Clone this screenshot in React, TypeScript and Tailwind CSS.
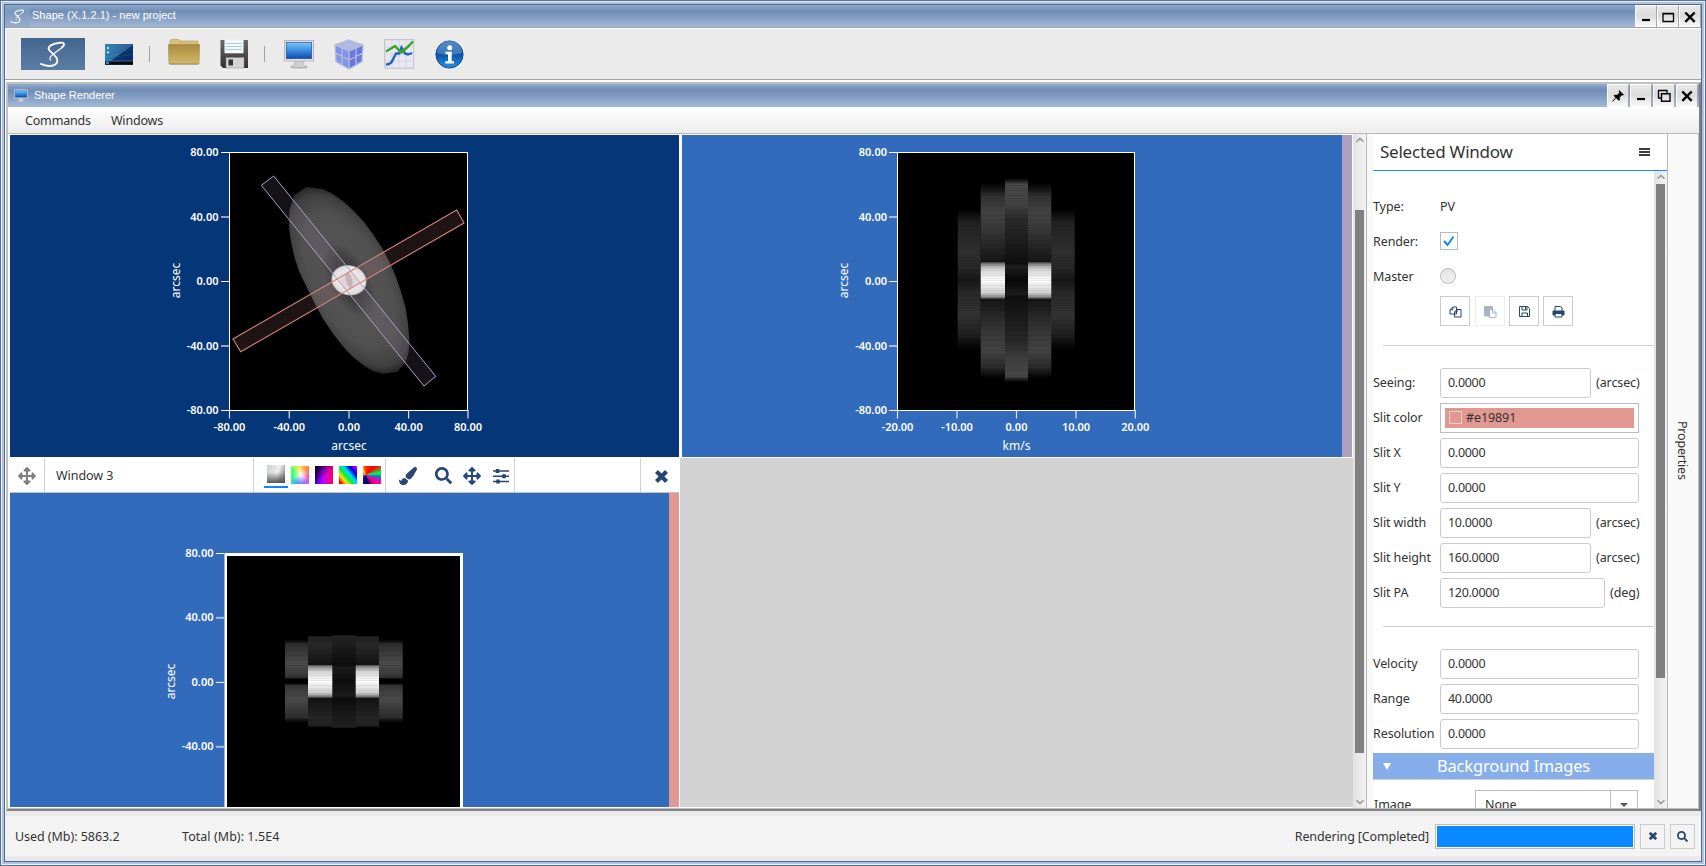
import React from "react";
import { FaArrowsAlt, FaPaintBrush, FaSearch } from "react-icons/fa";

const titleBar =
  "bg-[linear-gradient(to_bottom,#92aacb_0%,#6f8db5_28%,#7f9ac0_50%,#9fb6d6_95%,#a3b9d8_100%)]";
const ui = "font-['Noto_Sans','Noto_Sans_CJK_SC',sans-serif]";

function Monitor({ className }: { className: string }) {
  return (
    <svg className={className} viewBox="0 0 30 29" preserveAspectRatio="none">
      <defs>
        <linearGradient id="scr" x1="0" y1="0" x2="0" y2="1">
          <stop offset="0" stopColor="#7cc6f8" />
          <stop offset=".5" stopColor="#3a8ee0" />
          <stop offset="1" stopColor="#0d47ad" />
        </linearGradient>
      </defs>
      <ellipse cx="15" cy="27.6" rx="9" ry="1.2" fill="#c9c9c9" />
      <path d="M11 21h8l1 5h3v1.5H7V26h3z" fill="#cfcfcf" stroke="#a5a5a5" strokeWidth=".6" />
      <rect x=".5" y=".5" width="29" height="20.5" fill="#efefef" stroke="#b5b5b5" />
      <rect x="2.3" y="2.3" width="25.4" height="16.4" fill="url(#scr)" stroke="#31559a" strokeWidth=".8" />
    </svg>
  );
}

function LogoS({ className, w }: { className: string; w: number }) {
  return (
    <svg className={className} viewBox="0 0 28 28" fill="none" stroke="#fff" strokeLinecap="round">
      <path
        d="M23.500 6.500C27 3.200 25.500 1.300 21 1.800C14 2.600 8.500 5.500 9.500 8.500C10.500 11.500 18.500 15.500 18.500 20C18.500 26.500 9 27.300 1.500 23.800"
        strokeWidth={w}
      />
      <path d="M23.500 6.500C21 9 17 11.500 14 13.800C11.300 16 9.800 18.300 11.500 19.800" strokeWidth={w * 0.65} />
    </svg>
  );
}

function WinBtn({ kind, h }: { kind: string; h: string }) {
  return (
    <div
      className={`${h} flex w-[22px] items-center justify-center border-l border-t border-r border-l-white border-t-white border-r-[#a8a8a8] bg-[linear-gradient(to_bottom,#e9e9e9,#dcdcdc_45%,#fbfbfb)]`}
    >
      <svg width="14" height="14" viewBox="0 0 14 14" fill="none" stroke="#000">
        {kind === "min" && <path d="M3 10h8" strokeWidth="2.2" />}
        {kind === "max" && <path d="M2 3.500h10.500v8H2zM1.500 3.800h11.500" strokeWidth="1.300" />}
        {kind === "restore" && (
          <>
            <path d="M1 1.500h9.500M1.500 1v8M10 1v3M1 9h3" strokeWidth="1.300" />
            <path d="M4.500 4.700h8.500v7.500H4.500z" strokeWidth="1.400" />
          </>
        )}
        {kind === "close" && <path d="M2.300 2.500l9.400 9.400M11.700 2.500l-9.400 9.400" strokeWidth="2.400" />}
        {kind === "pin" && (
          <>
            <path d="M1.500 12.500L5.500 8" strokeWidth="1" />
            <path d="M8 1.200l4.800 4.500-.9.600-1-.2-2.300 2.400.2 2.400-1 .7-5-4.800.9-.9 2.500.1 2.200-2.300-.4-1.500z" fill="#000" strokeWidth=".3" />
          </>
        )}
      </svg>
    </div>
  );
}

function Toolbar() {
  return (
    <div className="flex h-[53px] shrink-0 items-center border-y border-[#a3a3a3] bg-[#ebebeb] pl-4 pt-px shadow-[inset_0_1px_0_#fff,inset_1px_0_0_#fff]">
      <div className="flex h-8 w-16 items-center justify-center bg-[linear-gradient(to_bottom,#42658f,#5b7ca5)]">
        <LogoS className="h-[27px] w-7" w={1.9} />
      </div>
      <svg className="ml-5 mt-px h-[23px] w-7" viewBox="0 0 28 23">
        <defs>
          <linearGradient id="desk" x1="0" y1="0" x2="1" y2="0">
            <stop offset="0" stopColor="#2f87b8" />
            <stop offset="1" stopColor="#35588f" />
          </linearGradient>
          <linearGradient id="desk2" x1="0" y1="0" x2="1" y2="1">
            <stop offset="0" stopColor="#0d3a72" />
            <stop offset="1" stopColor="#0a2a63" />
          </linearGradient>
        </defs>
        <rect width="28" height="21" y="1" fill="url(#desk)" />
        <path d="M28 2L6 17.500H28z" fill="url(#desk2)" />
        <path d="M0 12L28 6M0 16L28 11" stroke="#1d5c98" strokeWidth=".5" />
        <rect y="18.500" width="28" height="3.200" fill="#05070d" />
        <rect x="1" y="18.800" width="3" height="2" fill="#3c9be0" />
        <rect x="2" y="4" width="2" height="2" fill="#c4e5c4" />
        <rect x="2" y="8.500" width="2" height="2" fill="#c4e5c4" />
      </svg>
      <div className="ml-4 h-4 w-px bg-[#a0a0a0]" />
      <svg className="-mt-1 ml-[18px] h-[26px] w-8" viewBox="0 0 32 26">
        <defs>
          <linearGradient id="fold" x1="0" y1="0" x2="0" y2="1">
            <stop offset="0" stopColor="#a98b3e" />
            <stop offset="1" stopColor="#d2b767" />
          </linearGradient>
        </defs>
        <path d="M2 6V1.500L3 .5h8L12.500 2H30v4z" fill="#d6bf7b" stroke="#b59a50" strokeWidth=".6" />
        <path d="M.3 5.500H31.700L31 24.700H1z" fill="url(#fold)" stroke="#a88b43" strokeWidth=".6" />
        <path d="M1.500 25.200h29" stroke="#8c8163" strokeWidth=".8" />
      </svg>
      <svg className="ml-5 h-[30px] w-[29px]" viewBox="0 0 29 30">
        <defs>
          <linearGradient id="flop" x1="0" y1="0" x2="0" y2="1">
            <stop offset="0" stopColor="#6a6a6a" />
            <stop offset="1" stopColor="#303030" />
          </linearGradient>
        </defs>
        <path d="M.5 1H28v28H3L.5 26.500z" fill="url(#flop)" />
        <rect x="4.500" y=".8" width="19" height="13.500" fill="#f4fafc" />
        <path d="M6 4.500h16M6 7.500h16M6 10.500h16" stroke="#a8cfdc" />
        <rect x="6" y="18.500" width="18" height="10.500" fill="#d4d4d4" stroke="#888" strokeWidth=".5" />
        <rect x="8.500" y="20.500" width="4.500" height="6" fill="#333" />
      </svg>
      <div className="ml-[15px] h-4 w-px bg-[#a0a0a0]" />
      <Monitor className="ml-[19px] h-[29px] w-[30px]" />
      <svg className="ml-5 h-[31px] w-[30px]" viewBox="0 0 30 31">
        <path d="M15 1L29 6 15 12 1 6z" fill="#a9b6ef" />
        <path d="M1 6L15 12V30L2 22.500z" fill="#7f93f0" />
        <path d="M29 6L15 12V30L28 22.500z" fill="#6578e0" />
        <g stroke="#b9bccd" strokeWidth="1.300" fill="none">
          <path d="M15 1L29 6 15 12 1 6zM1 6L2 22.500 15 30 28 22.500 29 6M15 12V30M8 3.500L22 9V26M22 3.500L8 9V26M1.500 14L15 21 28.500 14" />
        </g>
      </svg>
      <svg className="ml-5 h-[30px] w-[31px]" viewBox="0 0 31 30">
        <rect x=".7" y=".7" width="29" height="28.500" fill="#e8e8f3" stroke="#bdbdca" />
        <path d="M8 1v28M15 1v28M22 1v28M1 8h29M1 15h29M1 22h29" stroke="#cccddb" strokeWidth=".7" />
        <path d="M2 25.500q5 0 7-5l3-6h3l2.500-6 3.500 6 3 1 4-1.500" fill="none" stroke="#2464bd" strokeWidth="2.400" />
        <path d="M2 12.500l9-5.500 6 6.500L23 8.500 29 2.500" fill="none" stroke="#38a51c" strokeWidth="2.400" />
      </svg>
      <svg className="ml-[20px] size-[29px]" viewBox="0 0 29 29">
        <defs>
          <linearGradient id="inf" x1="0" y1="0" x2="0" y2="1">
            <stop offset="0" stopColor="#2d6fb8" />
            <stop offset=".5" stopColor="#0c55a6" />
            <stop offset="1" stopColor="#2592e8" />
          </linearGradient>
        </defs>
        <circle cx="14.500" cy="14.500" r="13.600" fill="url(#inf)" stroke="#174b87" />
        <path d="M2 13a12.500 12.500 0 0 1 25 0q-12.500 4-25 0z" fill="#fff" opacity=".2" />
        <circle cx="14.700" cy="7.800" r="2.500" fill="#fff" />
        <path d="M10.500 11.800h6.200v9.400h2.300v2.300h-8.800v-2.300h2.800v-7h-2.500z" fill="#fff" />
      </svg>
    </div>
  );
}

type AxisProps = {
  x0: number;
  labelX: number;
  ys: [number, string][];
  xs: [number, string][];
  titleX: number;
  titleY: number;
  unit?: string;
  unitX?: number;
};

function Axes({ x0, labelX, ys, xs, titleX, titleY, unit, unitX }: AxisProps) {
  return (
    <g fill="#fff" className="font-['Noto_Sans',sans-serif] text-[11px]">
      {ys.map(([y, t]) => (
        <g key={t}>
          <path d={`M${x0 - 8} ${y}H${x0}`} stroke="#fff" strokeWidth={t.includes("40") ? 2 : 1} opacity={t.includes("40") ? 0.55 : 1} />
          <text x={labelX} y={y + 3.5} textAnchor="end" fontWeight="600">{t}</text>
        </g>
      ))}
      {xs.map(([x, t]) => (
        <g key={t}>
          <path d={`M${x} 410V418.500`} stroke="#fff" strokeWidth="1.200" opacity=".85" />
          <text x={x} y="431" textAnchor="middle" fontWeight="600">{t}</text>
        </g>
      ))}
      <text textAnchor="middle" fontSize="12" transform={`translate(${titleX} ${titleY}) rotate(-90)`}>arcsec</text>
      {unit && <text x={unitX} y="450" fontSize="12" textAnchor="middle">{unit}</text>}
    </g>
  );
}

const yTicks: [number, string][] = [[152.5, "80.00"], [217, "40.00"], [281.5, "0.00"], [346, "-40.00"], [410.5, "-80.00"]];

function ImageView() {
  return (
    <svg className="block h-[322px] w-[669px] bg-[#053678]" viewBox="10 135 669 322">
      <defs>
        <radialGradient id="disk" gradientUnits="userSpaceOnUse" cx="0" cy="0" r="1" gradientTransform="translate(349.300 280.500) rotate(62) scale(102 50)">
          <stop offset="0" stopColor="#333" />
          <stop offset=".2" stopColor="#3c3c3c" />
          <stop offset=".42" stopColor="#535353" />
          <stop offset=".72" stopColor="#505050" />
          <stop offset=".92" stopColor="#404040" />
          <stop offset="1" stopColor="#282828" />
        </radialGradient>
        <radialGradient id="core">
          <stop offset="0" stopColor="#e6dfe0" />
          <stop offset=".7" stopColor="#efefef" />
          <stop offset=".92" stopColor="#e2e2e2" />
          <stop offset="1" stopColor="#999" />
        </radialGradient>
      </defs>
      <rect x="229.500" y="152.500" width="238" height="258" fill="#000" stroke="#fff" />
      <path
        d="M306.700 187L323.300 189.300L331.700 193.300L343.300 201.300L354 211.300L364 222L373.300 234.700L381.700 247.300L389.300 261.700L396 276.700L401.300 292.700L405.300 306.700L408 323.300L409.300 338.300L408.700 351.700L406 361.700L397.300 371.700L383.300 373.700L373.300 371.300L363.300 365.300L353.300 357.300L343.300 346.700L333.300 334L323.300 319.300L314.700 303.300L306.700 287.300L299.300 272L294.300 256.700L290.700 240L289 226.700L289.300 210L294.300 195Z"
        fill="url(#disk)"
      />
      <ellipse cx="349" cy="280.300" rx="17.800" ry="15" fill="url(#core)" transform="rotate(15 349 280.300)" />
      <ellipse cx="349" cy="280.300" rx="3" ry="8" fill="#b9aeb1" opacity=".8" transform="rotate(-15 349 280.300)" />
      <path d="M261.300 185.300L273.700 176L435.700 376.300L424 386Z" fill="#b0a0c0" fillOpacity=".12" stroke="#aaa2c6" />
      <path d="M233 339L456.700 210L464 223L240.700 351.700Z" fill="#e19891" fillOpacity=".13" stroke="#d4857f" strokeWidth="1.100" />
      <Axes
        x0={229} labelX={218.500} ys={yTicks}
        xs={[[229.5, "-80.00"], [289.3, "-40.00"], [349, "0.00"], [408.6, "40.00"], [468, "80.00"]]}
        titleX={180} titleY={280.500} unit="arcsec" unitX={349}
      />
    </svg>
  );
}

function StripeDefs({ id }: { id: string }) {
  const stops: Record<string, [number, string, number][]> = {
    outer: [[0, "#222", 0], [0.1, "#222", 1], [0.3, "#2f2f2f", 1], [0.42, "#262626", 1], [0.5, "#171717", 1], [0.6, "#2a2a2a", 1], [0.75, "#333", 1], [0.9, "#1c1c1c", 1], [1, "#111", 0]],
    mid: [[0, "#222", 0], [0.07, "#303030", 1], [0.15, "#434343", 1], [0.25, "#363636", 1], [0.4, "#161616", 1], [0.6, "#161616", 1], [0.75, "#363636", 1], [0.86, "#434343", 1], [0.94, "#2a2a2a", 1], [1, "#222", 0]],
    center: [[0, "#303030", 0], [0.03, "#484848", 1], [0.13, "#424242", 1], [0.2, "#2a2a2a", 1], [0.4, "#121212", 1], [0.42, "#0f0f0f", 1], [0.43, "#202020", 1], [0.5, "#080808", 1], [0.57, "#1c1c1c", 1], [0.58, "#0f0f0f", 1], [0.8, "#282828", 1], [0.88, "#3e3e3e", 1], [0.97, "#484848", 1], [1, "#303030", 0]],
    hot: [[0, "#555", 1], [0.08, "#9a9a9a", 1], [0.2, "#d6d6d6", 1], [0.4, "#f0f0f0", 1], [0.5, "#fff", 1], [0.6, "#f0f0f0", 1], [0.82, "#d4d4d4", 1], [0.93, "#999", 1], [1, "#333", 1]],
    lobeT: [[0, "#111", 0], [0.12, "#2d2d2d", 1], [0.6, "#4a4a4a", 1], [0.85, "#3d3d3d", 1], [0.95, "#333", 1], [1, "#0a0a0a", 1]],
    lobeB: [[0, "#0a0a0a", 1], [0.05, "#333", 1], [0.15, "#3d3d3d", 1], [0.4, "#4a4a4a", 1], [0.85, "#2d2d2d", 1], [1, "#111", 0]],
    dim: [[0, "#222", 1], [0.1, "#282828", 1], [0.32, "#131313", 1], [0.68, "#131313", 1], [0.9, "#252525", 1], [1, "#202020", 1]],
    dimC: [[0, "#242424", 1], [0.32, "#0d0d0d", 1], [0.35, "#1c1c1c", 1], [0.5, "#0e0e0e", 1], [0.65, "#1c1c1c", 1], [0.68, "#0d0d0d", 1], [1, "#222", 1]],
  };
  return (
    <defs>
      {Object.entries(stops).map(([k, list]) => (
        <linearGradient key={k} id={`${id}-${k}`} x1="0" y1="0" x2="0" y2="1">
          {list.map(([o, c, a], i) => <stop key={i} offset={o} stopColor={c} stopOpacity={a} />)}
        </linearGradient>
      ))}
      <pattern id={`${id}-scan`} width="4" height="5" patternUnits="userSpaceOnUse">
        <rect width="4" height="1" fill="#000" opacity=".08" />
        <rect width="4" height="1" y="3" fill="#000" opacity=".04" />
      </pattern>
    </defs>
  );
}

function PvView() {
  return (
    <svg className="block h-[322px] w-[660px] bg-[#326bbc]" viewBox="682 135 660 322">
      <StripeDefs id="a" />
      <rect x="897.500" y="152.500" width="237" height="258" fill="#000" stroke="#fff" />
      <rect x="957.700" y="209" width="23" height="142" fill="url(#a-outer)" />
      <rect x="1051" y="209" width="23.700" height="142" fill="url(#a-outer)" />
      <rect x="980.700" y="182" width="24.300" height="197" fill="url(#a-mid)" />
      <rect x="1028" y="182" width="23.300" height="197" fill="url(#a-mid)" />
      <rect x="1005" y="178" width="23" height="204.500" fill="url(#a-center)" />
      <rect x="980.700" y="262.300" width="24.300" height="36.700" fill="url(#a-hot)" />
      <rect x="1028" y="262.300" width="23.300" height="36.700" fill="url(#a-hot)" />
      <rect x="957" y="178" width="118" height="205" fill="url(#a-scan)" />
      <Axes
        x0={897} labelX={887} ys={yTicks}
        xs={[[897.5, "-20.00"], [957, "-10.00"], [1016.500, "0.00"], [1076, "10.00"], [1135.300, "20.00"]]}
        titleX={848} titleY={280.500} unit="km/s" unitX={1016.500}
      />
    </svg>
  );
}

function PvView3() {
  return (
    <svg className="block h-[314px] w-[659px] bg-[#326bbc]" viewBox="10 493 659 314">
      <StripeDefs id="b" />
      <rect x="224" y="553" width="239" height="270" fill="#fff" />
      <path d="M224.500 553V807" stroke="#aab4c4" />
      <rect x="227" y="556" width="233" height="260" fill="#000" />
      <rect x="285" y="639" width="23" height="40" fill="url(#b-lobeT)" />
      <rect x="379" y="639" width="23.700" height="40" fill="url(#b-lobeT)" />
      <rect x="285" y="683.500" width="23" height="40" fill="url(#b-lobeB)" />
      <rect x="379" y="683.500" width="23.700" height="40" fill="url(#b-lobeB)" />
      <rect x="308" y="636.300" width="71" height="90.400" fill="url(#b-dim)" />
      <rect x="332.300" y="635.300" width="23.400" height="92.400" fill="url(#b-dimC)" />
      <rect x="308" y="665" width="24.300" height="33" fill="url(#b-hot)" />
      <rect x="355.700" y="665" width="23.300" height="33" fill="url(#b-hot)" />
      <rect x="285" y="635" width="118" height="93" fill="url(#b-scan)" />
      <Axes
        x0={224} labelX={213.500}
        ys={[[553.5, "80.00"], [617.8, "40.00"], [682.400, "0.00"], [746.800, "-40.00"]]}
        xs={[]} titleX={175} titleY={681.500}
      />
    </svg>
  );
}

function Swatch({ cls, on }: { cls: string; on?: boolean }) {
  return (
    <div className={`flex h-full w-6 flex-col items-center ${on ? "pt-[7px]" : "pt-2"}`}>
      <div className={`size-[18px] ${cls}`} />
      {on && <div className="mt-[3px] h-[2px] w-6 bg-[#0a84ff]" />}
    </div>
  );
}

function WindowThree() {
  const c = "text-[#26476f]";
  return (
    <div className="w-[669px]">
      <div className="flex h-[35px] border-b border-[#c2c2c2] bg-white">
        <div className="flex w-[35px] items-center justify-center border-r border-[#d0d0d0] pt-px text-[#808080]">
          <FaArrowsAlt size={18} />
        </div>
        <div className={`flex w-[209px] items-center border-r border-[#d0d0d0] pl-[11px] pt-[3px] text-[12.500px] tracking-[-0.050px] text-[#333] ${ui}`}>Window 3</div>
        <div className="flex w-[132px] border-r border-[#d0d0d0] pl-[10px]">
          <Swatch on cls="bg-[linear-gradient(to_top,#555_0%,#0000_60%),linear-gradient(110deg,#c8d0cc,#eee_55%,#777_95%)]" />
          <Swatch cls="bg-[radial-gradient(circle_at_55%_50%,#fff_0%,#fff0_60%),conic-gradient(from_45deg,#ff8a3c,#ff4d9a,#b66bff,#4d9aff,#34ff8a,#4dff5e,#ffe95a,#ff8a3c)]" />
          <Swatch cls="bg-[linear-gradient(to_bottom_right,#000_0%,#0000_55%),linear-gradient(to_right,#3a00d8,#c800ff_50%,#ff0055)]" />
          <Swatch cls="bg-[linear-gradient(50deg,#ff0000_8%,#ffe600_25%,#00f03c_42%,#00d8ff_58%,#0000d8_75%,#b400ff_95%)]" />
          <Swatch cls="bg-[conic-gradient(from_0deg_at_15%_50%,#ff2a00,#ff0000_14%,#00ff50_23%,#007acc_27%,#ff00a8_32%,#e00080_38%,#000070_46%,#0a0a90_58%,#ff5a00_76%,#ffe000_92%,#ff2a00)]" />
        </div>
        <div className={`flex w-[129px] items-center border-r border-[#d0d0d0] pl-[13px] pt-px ${c}`}>
          <FaPaintBrush size={18} />
          <FaSearch size={17} className="ml-[18px]" />
          <FaArrowsAlt size={18} className="ml-[11px]" />
          <svg className="ml-3 h-4 w-4" viewBox="0 0 16 16" stroke="currentColor" strokeWidth="1.500">
            <path d="M0 3h16M0 8.300h16M0 13.500h16" />
            <path d="M4.500 1v4M11 6.300v4M5 11.500v4" strokeWidth="3.500" />
          </svg>
        </div>
        <div className="w-[126px] border-r border-[#d0d0d0]" />
        <div className={`flex flex-1 items-center justify-center pl-[2px] pt-[2px] ${c}`}>
          <svg width="13" height="13" viewBox="0 0 13 13" stroke="currentColor" strokeWidth="4.200"><path d="M1.500 1.500l10 10M11.500 1.500l-10 10" /></svg>
        </div>
      </div>
      <div className="flex">
        <PvView3 />
        <div className="w-[10px] bg-[#e19891]" />
      </div>
    </div>
  );
}

function ScrollBar({ top, thumb, w }: { top: string; thumb: string; w: string }) {
  return (
    <div className={`flex ${w} flex-col items-center bg-[linear-gradient(to_right,#e2e2e2,#f2f2f2)] py-[3px]`}>
      <svg className="shrink-0" width="8" height="6" viewBox="0 0 8 6" fill="none" stroke="#909090" strokeWidth="1.300"><path d="M.5 4.800L4 1.500l3.500 3.300" /></svg>
      <div className={`${top} ${thumb} w-[9px] shrink-0 bg-[#808080]`} />
      <svg className="mt-auto shrink-0" width="8" height="6" viewBox="0 0 8 6" fill="none" stroke="#909090" strokeWidth="1.300"><path d="M.5 1.200L4 4.500l3.500-3.300" /></svg>
    </div>
  );
}

function Row({ label, children }: { label: string; children: React.ReactNode }) {
  return (
    <div className="flex h-[35px] shrink-0 items-center">
      <div className="w-[67px] shrink-0 whitespace-nowrap pt-px">{label}</div>
      {children}
    </div>
  );
}

function Field({ value, w, unit }: { value: string; w: string; unit?: string }) {
  return (
    <>
      <div className={`${w} flex h-[30px] items-center rounded-[3px] border border-[#cbcbcb] bg-white pl-[7px] pt-px tracking-[-0.300px]`}>{value}</div>
      {unit && <div className="ml-[5px] pt-px">{unit}</div>}
    </>
  );
}

function IconBtn({ children, off, mr = "mr-[5px]" }: { children: React.ReactNode; off?: boolean; mr?: string }) {
  return (
    <div className={`${mr} mb-px flex size-[30px] items-center justify-center border text-[#26476f] ${off ? "border-[#ececec] *:opacity-40" : "border-[#cbcbcb]"}`}>
      <svg width="13" height="13" viewBox="0 0 13 13" fill="none" stroke="currentColor" strokeWidth="1">{children}</svg>
    </div>
  );
}

function Properties() {
  return (
    <div className={`flex w-[294px] flex-col bg-white text-[12.500px] tracking-[-0.1px] text-[#333] ${ui}`}>
      <div className="flex h-[37px] shrink-0 items-center border-b border-[#1a8cff] pl-[7px] pr-[17px]">
        <div className="text-[17px] tracking-[-0.23px]">Selected Window</div>
        <svg className="ml-auto" width="11" height="8" viewBox="0 0 11 8"><path d="M0 1h11M0 4h11M0 7h11" stroke="#000" strokeWidth="1.400" /></svg>
      </div>
      <div className="flex min-h-0 flex-1">
        <div className="flex w-[281px] flex-col overflow-hidden pt-[18px]">
          <Row label="Type:"><span className="pt-px">PV</span></Row>
          <Row label="Render:">
            <div className="mb-px flex size-[18px] items-center justify-center border border-[#bbb]">
              <svg width="12" height="12" viewBox="0 0 12 12" fill="none" stroke="#0a84ff" strokeWidth="1.900"><path d="M1 6l3.500 4L10.500 1.500" /></svg>
            </div>
          </Row>
          <Row label="Master"><div className="mb-px size-4 rounded-full border border-[#bdbdbd] bg-[linear-gradient(to_bottom,#e4e4e4,#f0f0f0)]" /></Row>
          <Row label="">
            <IconBtn><path d="M3.800 2h3.700v7H1V4.800zM1 4.800h2.800V2M8 4.500h4V12H5.500V7zM5.500 7H8V4.500" /></IconBtn>
            <IconBtn off mr="mr-1"><path d="M.5 1.500h8v9.500h-8z" fill="currentColor" /><path d="M5.500 4.500h3.500L12 7.500v5H5.500zM8.500 4.500V8H12" fill="#fff" /></IconBtn>
            <IconBtn mr="mr-1"><path d="M1.500 1.500h8L11.500 3.500v8h-10zM4 1.500V5h5V1.500M4 11.500V8h5.500v3.500M7.500 2v2.500" /></IconBtn>
            <IconBtn><path d="M3 6V1.500h5.500L10 3v3M3 8.500h7V12H3z" /><path d="M1 6h11v4H10V8.500H3V10H1z" fill="currentColor" /></IconBtn>
          </Row>
          <div className="mb-[19px] ml-[10px] mt-[16px] h-px shrink-0 bg-[#cfcfcf]" />
          <Row label="Seeing:"><Field value="0.0000" w="w-[151px]" unit="(arcsec)" /></Row>
          <Row label="Slit color">
            <div className="h-[30px] w-[199px] border border-[#bdbdbd] p-1">
              <div className="flex h-5 items-center gap-1 bg-[#e19891] pl-1">
                <div className="size-[13px] border border-[#e6cfcc]" />
                <span className="pt-px">#e19891</span>
              </div>
            </div>
          </Row>
          <Row label="Slit X"><Field value="0.0000" w="w-[199px]" /></Row>
          <Row label="Slit Y"><Field value="0.0000" w="w-[199px]" /></Row>
          <Row label="Slit width"><Field value="10.0000" w="w-[151px]" unit="(arcsec)" /></Row>
          <Row label="Slit height"><Field value="160.0000" w="w-[151px]" unit="(arcsec)" /></Row>
          <Row label="Slit PA"><Field value="120.0000" w="w-[165px]" unit="(deg)" /></Row>
          <div className="mb-[19px] ml-[10px] mt-[16px] h-px shrink-0 bg-[#cfcfcf]" />
          <Row label="Velocity"><Field value="0.0000" w="w-[199px]" /></Row>
          <Row label="Range"><Field value="40.0000" w="w-[199px]" /></Row>
          <Row label="Resolution"><Field value="0.0000" w="w-[199px]" /></Row>
          <div className="mt-[2px] flex h-[27px] shrink-0 items-center border-b border-[#cfcfcf] bg-[#86aeeb] text-white">
            <svg className="ml-[10px]" width="8" height="7" viewBox="0 0 8 7"><path d="M0 0h8L4 7z" fill="#fff" /></svg>
            <div className="flex-1 pr-[18px] text-center text-[16.500px] tracking-[-0.150px]">Background Images</div>
          </div>
          <div className="flex shrink-0 pt-[10px]">
            <div className="w-[102px] pl-px pt-[6px]">Image</div>
            <div className="flex h-[30px] w-[163px] border border-[#bdbdbd]">
              <div className="flex flex-1 items-center pl-[9px] text-[12.500px]">None</div>
              <div className="flex w-[27px] items-center justify-center border-l border-[#bdbdbd]">
                <svg width="8" height="4" viewBox="0 0 8 4"><path d="M0 0h8L4 4z" fill="#555" /></svg>
              </div>
            </div>
          </div>
        </div>
        <ScrollBar w="w-[13px]" top="mt-1" thumb="h-[494px]" />
      </div>
    </div>
  );
}

function InnerFrame() {
  return (
    <div className="ml-px mt-[2px] flex h-[729px] w-[1695px] shrink-0 flex-col border-2 border-b-[#808080] border-l-[#c0c0c0] border-r-[#808080] border-t-[#c0c0c0]">
      <div className={`flex h-[23px] shrink-0 items-center pl-[6px] pr-px ${titleBar}`}>
        <Monitor className="h-[13px] w-[14px]" />
        <div className="ml-[6px] flex-1 font-['Liberation_Sans',sans-serif] text-[11px] text-white">Shape Renderer</div>
        <div className="flex gap-[1px]">
          <WinBtn kind="pin" h="h-[23px]" />
          <WinBtn kind="min" h="h-[23px]" />
          <WinBtn kind="restore" h="h-[23px]" />
          <WinBtn kind="close" h="h-[23px]" />
        </div>
      </div>
      <div className={`flex h-[27px] shrink-0 items-center gap-[20px] border-b border-[#b8b8b8] bg-[linear-gradient(to_bottom,#fefefe,#ededed)] pl-[17px] pt-[2px] text-[12.500px] tracking-[-0.170px] text-[#333] ${ui}`}>
        <span>Commands</span>
        <span>Windows</span>
      </div>
      <div className="flex min-h-0 flex-1 border-b border-r border-[#c0c0c0]">
        <div className="flex w-[1345px] flex-col bg-white pl-[2px] pt-px">
          <div className="flex h-[322px] gap-[3px]">
            <ImageView />
            <div className="flex">
              <PvView />
              <div className="w-[10px] bg-[#b0a0c1]" />
            </div>
          </div>
          <div className="flex h-[350px] pt-px">
            <WindowThree />
            <div className="ml-px flex-1 bg-[#d3d3d3]" />
          </div>
        </div>
        <ScrollBar w="w-[13px]" top="mt-[67px]" thumb="h-[543px]" />
        <div className="w-[7px] border-l border-[#b8b8b8] bg-[#f9f9f9]" />
        <Properties />
        <div className={`flex flex-1 justify-center border-l border-[#b8b8b8] bg-[#f9f9f9] pr-[2px] pt-[287px] text-[12.500px] tracking-[-0.2px] text-[#333] ${ui}`}>
          <span className="[writing-mode:vertical-rl]">Properties</span>
        </div>
      </div>
    </div>
  );
}

function StatusBar() {
  return (
    <div className={`flex flex-1 items-center border-y-5 border-[#eaeaea] bg-[#f3f3f3] pl-[10px] pr-[6px] text-[12.500px] text-[#333] ${ui}`}>
      <span className="w-[167px] pt-[2px] tracking-[-0.050px]">Used (Mb): 5863.2</span>
      <span className="pt-[2px] tracking-[0.050px]">Total (Mb): 1.5E4</span>
      <span className="ml-auto pt-[2px] tracking-[-0.130px]">Rendering [Completed]</span>
      <div className="ml-[6px] h-[25px] w-[200px] border border-[#bdbdbd] bg-white p-px">
        <div className="h-full bg-[#0a88ff]" />
      </div>
      <div className="ml-[5px] flex size-[25px] items-center justify-center border border-[#cbcbcb] text-[#26476f]">
        <svg width="8" height="8" viewBox="0 0 8 8" stroke="currentColor" strokeWidth="2.700"><path d="M.8 .8l6.400 6.400M7.200 .8L.8 7.200" /></svg>
      </div>
      <div className="ml-[5px] flex size-[25px] items-center justify-center border border-[#cbcbcb] text-[#26476f]">
        <FaSearch size={11} />
      </div>
    </div>
  );
}

export default function App() {
  return (
    <div className="h-[866px] w-[1706px] overflow-hidden border border-[#4f72a5]">
      <div className="h-full border border-[#eef2f8]">
        <div className="h-full border-2 border-[#b3c2db]">
          <div className="h-full border border-[#4a6b9c]">
            <div className="flex h-full flex-col bg-white">
              <div className={`flex h-[22px] shrink-0 items-center ${titleBar}`}>
                <div className="flex h-full w-[25px] items-center justify-center bg-[#8aa3c6]/50">
                  <LogoS className="size-[15px]" w={2} />
                </div>
                <div className="ml-[2px] flex-1 pb-[2px] font-['Liberation_Sans',sans-serif] text-[11px] tracking-[0.030px] text-white">Shape (X.1.2.1) - new project</div>
                <div className="flex">
                  <WinBtn kind="min" h="h-[22px]" />
                  <WinBtn kind="max" h="h-[22px]" />
                  <WinBtn kind="close" h="h-[22px]" />
                </div>
              </div>
              <Toolbar />
              <InnerFrame />
              <StatusBar />
            </div>
          </div>
        </div>
      </div>
    </div>
  );
}
